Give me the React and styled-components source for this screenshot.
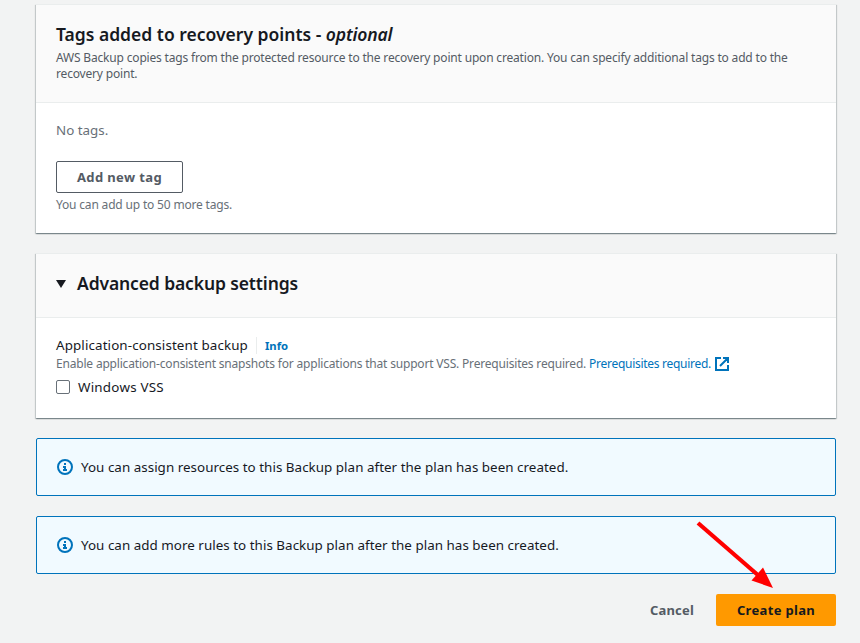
import React from 'react';
import styled, { createGlobalStyle } from 'styled-components';

const GlobalStyle = createGlobalStyle`
  * { box-sizing: border-box; }
  body {
    margin: 0;
    background: #f2f3f3;
    color: #16191f;
    font: 400 13.4px/22px "Noto Sans", "Open Sans", sans-serif;
    overflow: hidden;
  }
`;

const Page = styled.main`
  position: relative;
  display: flex;
  flex-direction: column;
  gap: 20px;
  width: 860px;
  height: 643px;
  padding: 4px 24px 0 36px;
`;

const Card = styled.section`
  display: flex;
  flex-direction: column;
  width: 800px;
  height: ${(p) => p.$height}px;
  flex: none;
  background: #fff;
  border-top: 1px solid #eaeded;
  box-shadow:
    0 1px 1px 0 rgba(0, 28, 36, 0.3),
    1px 1px 1px 0 rgba(0, 28, 36, 0.15),
    -1px 1px 1px 0 rgba(0, 28, 36, 0.15);
`;

const CardHeader = styled.header`
  height: ${(p) => p.$height}px;
  flex: none;
  padding: 18px 20px 0;
  background: #fafafa;
  border-bottom: 1px solid #eaeded;
`;

const CardBody = styled.div`
  display: flex;
  flex-direction: column;
  align-items: flex-start;
  padding: 16px 20px 0;
`;

const Title = styled.h2`
  display: flex;
  align-items: center;
  margin: 0;
  font-size: 17.5px;
  font-weight: 600;
  line-height: 22px;
  letter-spacing: ${(p) => p.$track || 0}px;
  white-space: pre;
`;

const Optional = styled.em`
  letter-spacing: -0.15px;
`;

const Caret = styled.svg`
  width: 10px;
  height: 8px;
  margin: 2px 11px 0 0;
`;

const Hint = styled.p`
  margin: ${(p) => p.$top || 0}px 0 0;
  color: ${(p) => p.$color || '#687078'};
  font-size: 12px;
  line-height: 16px;
  letter-spacing: ${(p) => p.$track || -0.177}px;
  white-space: nowrap;
`;

const Empty = styled.div`
  color: #687078;
  letter-spacing: 0;
`;

const Button = styled.button`
  height: 32px;
  width: ${(p) => p.$width}px;
  padding: 0;
  border: 1px solid ${(p) => (p.$kind === 'normal' ? '#545b64' : 'transparent')};
  border-radius: 2px;
  background: ${(p) => ({ normal: '#fff', primary: '#ff9900', link: 'transparent' })[p.$kind]};
  color: ${(p) => (p.$kind === 'primary' ? '#16191f' : '#545b64')};
  font: 700 13px/20px "Noto Sans", "Open Sans", sans-serif;
  letter-spacing: ${(p) => p.$track}px;
`;

const AddButton = styled(Button)`
  margin-top: 20px;
`;

const FieldLabel = styled.div`
  display: flex;
  align-items: center;
  height: 22px;
  letter-spacing: 0.11px;
`;

const Info = styled.a`
  margin-left: 8px;
  padding: 1px 0 0 8px;
  border-left: 1px solid #eaeded;
  color: #0073bb;
  font-size: 11.3px;
  font-weight: 700;
  line-height: 16px;
  letter-spacing: 0;
`;

const Link = styled.a`
  color: #0073bb;
  letter-spacing: -0.28px;
`;

const ExternalIcon = styled.svg`
  width: 14px;
  height: 14px;
  margin-left: 4px;
  vertical-align: -3px;
`;

const CheckRow = styled.label`
  display: flex;
  align-items: center;
  gap: 8px;
  height: 22px;
  margin-top: 4px;
  letter-spacing: 0.23px;
`;

const Checkbox = styled.span`
  width: 14px;
  height: 14px;
  border: 1px solid #687078;
  border-radius: 2px;
  background: #fff;
`;

const Alert = styled.div`
  display: flex;
  align-items: center;
  gap: 8px;
  width: 800px;
  height: 58px;
  flex: none;
  padding: 0 20px;
  border: 1px solid #0073bb;
  border-radius: 2px;
  background: #f1faff;
  letter-spacing: 0.03px;
`;

const AlertIcon = styled.svg`
  width: 16px;
  height: 16px;
`;

const Actions = styled.footer`
  display: flex;
  justify-content: flex-end;
  width: 800px;
`;

const Arrow = styled.svg`
  position: absolute;
  left: 690px;
  top: 515px;
  width: 90px;
  height: 80px;
`;

function InfoIcon() {
  return (
    <AlertIcon viewBox="0 0 16 16" fill="none" stroke="#0073bb" strokeWidth="2">
      <circle cx="8" cy="8" r="7" />
      <path d="M8 4v2M6 8h2v3M6 11h4" />
    </AlertIcon>
  );
}

export default function App() {
  return (
    <>
      <GlobalStyle />
      <Page>
        <Card $height={229}>
          <CardHeader $height={98}>
            <Title>
              {'Tags added to recovery points - '}
              <Optional>optional</Optional>
            </Title>
            <Hint $top={5} $color="#545b64">
              AWS Backup copies tags from the protected resource to the recovery point upon creation. You can
              specify additional tags to add to the
              <br />
              recovery point.
            </Hint>
          </CardHeader>
          <CardBody>
            <Empty>No tags.</Empty>
            <AddButton $kind="normal" $width={127} $track={0.37}>Add new tag</AddButton>
            <Hint $top={4}>You can add up to 50 more tags.</Hint>
          </CardBody>
        </Card>

        <Card $height={165}>
          <CardHeader $height={64}>
            <Title $track={-0.12}>
              <Caret viewBox="0 0 10 8"><path d="M0 0h10L5 8z" fill="#16191f" /></Caret>
              Advanced backup settings
            </Title>
          </CardHeader>
          <CardBody>
            <FieldLabel>
              Application-consistent backup
              <Info>Info</Info>
            </FieldLabel>
            <Hint $track={-0.187}>
              Enable application-consistent snapshots for applications that support VSS. Prerequisites required.{' '}
              <Link>Prerequisites required.</Link>
              <ExternalIcon viewBox="0 0 14 14" fill="none" stroke="#0073bb" strokeWidth="2">
                <path d="M6 1H1v12h12V8M8 1h5v5M13 1L5 9" />
              </ExternalIcon>
            </Hint>
            <CheckRow>
              <Checkbox />
              Windows VSS
            </CheckRow>
          </CardBody>
        </Card>

        <Alert>
          <InfoIcon />
          You can assign resources to this Backup plan after the plan has been created.
        </Alert>
        <Alert>
          <InfoIcon />
          You can add more rules to this Backup plan after the plan has been created.
        </Alert>

        <Actions>
          <Button $kind="link" $width={88} $track={0.2}>Cancel</Button>
          <Button $kind="primary" $width={120} $track={0.32}>Create plan</Button>
        </Actions>

        <Arrow viewBox="690 515 90 80">
          <path d="M698 523L759 576" stroke="#f00" strokeWidth="4.2" />
          <path d="M773 588L763 567.500L751.500 580.500z" fill="#f00" />
        </Arrow>
      </Page>
    </>
  );
}
